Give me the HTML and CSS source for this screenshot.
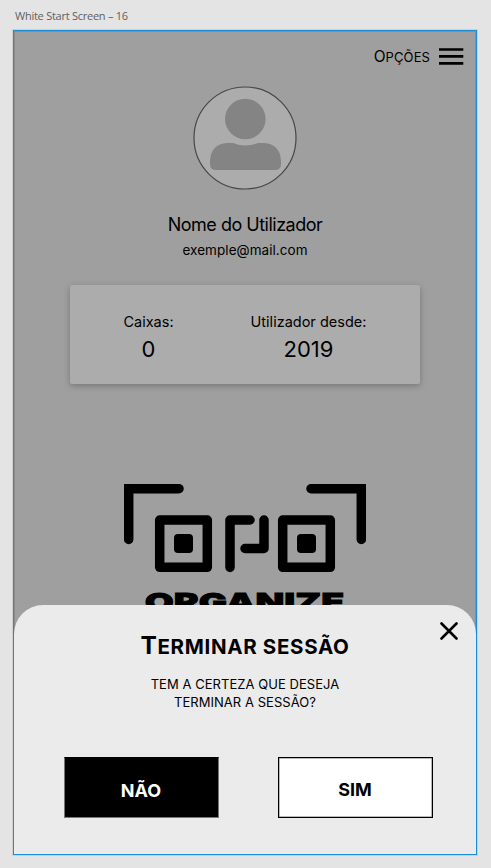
FILE: index.html
```html
<!DOCTYPE html>
<html lang="pt">
<head>
<meta charset="utf-8">
<title>White Start Screen – 16</title>
<link rel="stylesheet" href="styles.css">
</head>
<body>
<div class="label">White Start Screen – 16</div>
<main class="artboard">
  <header class="topbar">
    <span class="options">Opções</span>
    <svg class="menu" width="25" height="18" viewBox="0 0 25 18"><path d="M0 1.500h24.300M0 8.400h24.300M0 15.300h24.300" stroke="#000" stroke-width="2.700"/></svg>
  </header>
  <svg class="avatar" width="104" height="104" viewBox="0 0 104 104">
    <circle cx="52" cy="52" r="51" fill="#acacac" stroke="#474747" stroke-width="1.200"/>
    <circle cx="52.300" cy="33" r="20.300" fill="#848484"/>
    <path d="M34 57h6q12.500 5 25 0h6Q87 58 88 75v3q0 6-6 6H23q-6 0-6-6v-3Q18 58 34 57Z" fill="#848484"/>
  </svg>
  <h1 class="name">Nome do Utilizador</h1>
  <p class="mail">exemple@mail.com</p>
  <section class="stats">
    <div class="stat boxes"><span class="key">Caixas:</span><span class="value">0</span></div>
    <div class="stat since"><span class="key">Utilizador desde:</span><span class="value">2019</span></div>
  </section>
  <svg class="logo" width="242" height="89" viewBox="0 0 242 89">
    <g fill="none" stroke="#000" stroke-width="9.500">
      <path stroke-linecap="round" d="M4.700 55.500V4.700H55M187 4.700h50.300V55.500"/>
      <rect x="35.700" y="36" width="47.600" height="47.300" stroke-linejoin="round"/>
      <rect x="158.700" y="36" width="47.600" height="47.300" stroke-linejoin="round"/>
      <path stroke-linecap="round" stroke-linejoin="round" d="M106 83.500V36h20M140 36v28.500h-19"/>
    </g>
    <rect x="50" y="50" width="19" height="19" rx="4"/>
    <rect x="173" y="50" width="19" height="19" rx="4"/>
  </svg>
  <div class="brand"><span>ORGANIZE</span></div>
  <section class="sheet">
    <svg class="close" width="18" height="18" viewBox="0 0 18 18"><path d="M1.500 1.500l15 15M16.500 1.500l-15 15" stroke="#000" stroke-width="2.600" stroke-linecap="round"/></svg>
    <h2 class="title">Terminar sessão</h2>
    <p class="question"><span class="line first">tem a certeza que deseja</span><span class="line second">terminar a sessão?</span></p>
    <div class="actions">
      <button class="no">NÃO</button>
      <button class="yes">SIM</button>
    </div>
  </section>
</main>
</body>
</html>
```
FILE: styles.css
```css
* { box-sizing: border-box; }
body { margin: 0; width: 491px; height: 868px; overflow: hidden; background: #e4e4e4; color: #000; font-family: Inter, sans-serif; }
.label { height: 30px; padding: 8px 0 0 15px; font: 11px/15px "Open Sans", sans-serif; letter-spacing: -.25px; color: #606060; }
.artboard { position: relative; width: 464px; height: 825px; margin-left: 13px; border: 1px solid #1c8dd8; background: #9f9f9f; display: flex; flex-direction: column; align-items: center; overflow: hidden; box-shadow: 0 0 0 1px #d0d0d0, inset 0 0 0 1px #8d8d8d; }
h1, h2, p { margin: 0; font-weight: 400; white-space: nowrap; }
.topbar { align-self: stretch; height: 55px; padding: 16px 12px 0 0; display: flex; justify-content: flex-end; }
.options { display: block; font-size: 13px; line-height: 19px; text-transform: uppercase; letter-spacing: .1px; margin-right: 9px; }
.options::first-letter { font-size: 15.500px; }
.menu { display: block; margin-top: 1px; }
.avatar { display: block; }
.name { margin-top: 23px; font-size: 18px; line-height: 24px; letter-spacing: -.5px; }
.mail { margin-top: 4px; font-size: 13.500px; line-height: 18px; letter-spacing: .05px; }
.stats { width: 350px; height: 99px; margin-top: 26px; border-radius: 2px; background: #acacac; box-shadow: 0 2px 6px #00000040; display: flex; padding-top: 27px; }
.stat { display: flex; flex-direction: column; align-items: center; white-space: nowrap; }
.boxes { width: 157px; }
.since { width: 163px; }
.key { font-size: 14.500px; line-height: 20px; }
.value { font-size: 22px; line-height: 34px; }
.logo { display: block; margin-top: 100px; }
.brand { height: 30px; margin-top: 14px; font: 900 25px/30px Inter, sans-serif; }
.brand span { display: block; transform: scaleX(1.500); -webkit-text-stroke: .8px #000; }
.sheet { position: absolute; left: 0; right: 0; bottom: 0; height: 249px; border-radius: 29px 29px 0 0; background: #ebebeb; display: flex; flex-direction: column; align-items: center; }
.close { position: absolute; right: 18px; top: 17px; }
.title { margin-top: 24px; font-size: 20.500px; line-height: 32px; font-weight: 700; text-transform: uppercase; letter-spacing: .67px; }
.title::first-letter { font-size: 24.500px; }
.question { margin-top: 12px; display: flex; flex-direction: column; align-items: center; font-size: 13px; line-height: 18px; text-transform: uppercase; letter-spacing: .05px; }
.actions { margin-top: 46px; margin-left: 6px; display: flex; gap: 59px; }
button { width: 155px; height: 61px; padding: 4px 0 0; border: 1px solid #000; font: 700 18px Inter, sans-serif; }
.no { background: #000; color: #fff; border-color: #777; border-top-color: #000; padding-top: 6px; }
.yes { background: #fff; color: #000; box-shadow: inset 0 0 0 .5px #777; }
```
